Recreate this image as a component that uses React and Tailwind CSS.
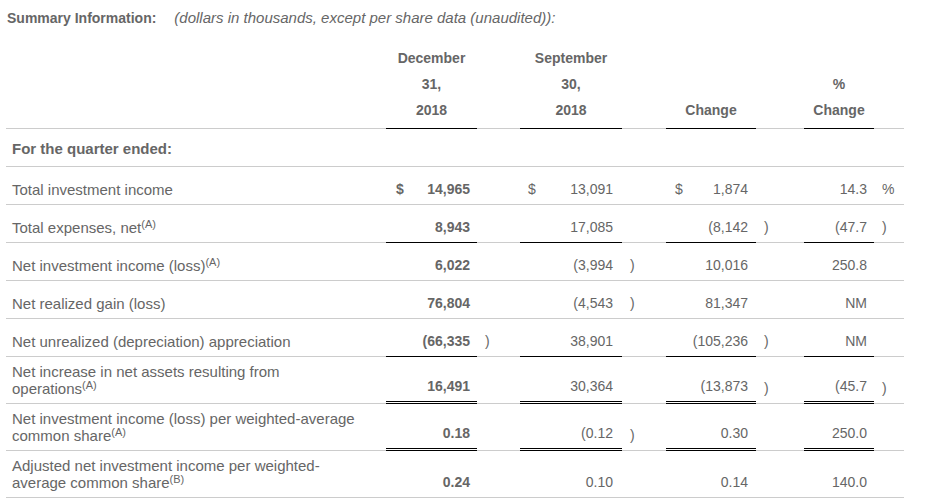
import React from "react";

const GRID =
  "grid grid-cols-[380px_91px_43px_102px_44px_90px_48px_70px_30px]";

const PAD = [
  "pl-[10px] pr-[7px]",
  "pl-[8px] pr-[9px]",
  "pl-[9px] pr-[8px]",
  "pl-[8px] pr-[7px]",
];

const LINE = {
  none: "",
  single: "border-b border-black -mb-px",
  double: "border-b-[3px] border-double border-black -mb-px",
};

const rows = [
  {
    label: "Total investment income",
    h: "h-[38px]",
    line: "none",
    cells: [
      ["$", "14,965", ""],
      ["$", "13,091", ""],
      ["$", "1,874", ""],
      ["", "14.3", "%"],
    ],
  },
  {
    label: "Total expenses, net",
    sup: "(A)",
    h: "h-[38px]",
    line: "single",
    cells: [
      ["", "8,943", ""],
      ["", "17,085", ""],
      ["", "(8,142", ")"],
      ["", "(47.7", ")"],
    ],
  },
  {
    label: "Net investment income (loss)",
    sup: "(A)",
    h: "h-[38px]",
    line: "none",
    cells: [
      ["", "6,022", ""],
      ["", "(3,994", ")"],
      ["", "10,016", ""],
      ["", "250.8", ""],
    ],
  },
  {
    label: "Net realized gain (loss)",
    h: "h-[38px]",
    line: "none",
    cells: [
      ["", "76,804", ""],
      ["", "(4,543", ")"],
      ["", "81,347", ""],
      ["", "NM", ""],
    ],
  },
  {
    label: "Net unrealized (depreciation) appreciation",
    h: "h-[38px]",
    line: "single",
    cells: [
      ["", "(66,335", ")"],
      ["", "38,901", ""],
      ["", "(105,236", ")"],
      ["", "NM", ""],
    ],
  },
  {
    label: "Net increase in net assets resulting from operations",
    sup: "(A)",
    h: "h-[47px]",
    line: "double",
    cells: [
      ["", "16,491", ""],
      ["", "30,364", ""],
      ["", "(13,873", ")"],
      ["", "(45.7", ")"],
    ],
  },
  {
    label: "Net investment income (loss) per weighted-average common share",
    sup: "(A)",
    h: "h-[47px]",
    line: "double",
    cells: [
      ["", "0.18", ""],
      ["", "(0.12", ")"],
      ["", "0.30", ""],
      ["", "250.0", ""],
    ],
  },
  {
    label: "Adjusted net investment income per weighted-average common share",
    sup: "(B)",
    h: "h-[47px]",
    line: "none",
    cells: [
      ["", "0.24", ""],
      ["", "0.10", ""],
      ["", "0.14", ""],
      ["", "140.0", ""],
    ],
  },
];

function Label({ text, sup }) {
  const words = text.split(" ");
  const last = words.pop();
  return (
    <div className="flex items-end pl-[6px] pb-[6px]">
      <div className="w-[350px] text-[15px] leading-[17px]">
        {words.join(" ")}{" "}
        <span className="whitespace-nowrap">
          {last}
          {sup && <sup className="text-[11px]">{sup}</sup>}
        </span>
      </div>
    </div>
  );
}

function ValueCell({ d, v, col, line }) {
  const bold = col === 0;
  return (
    <div
      className={`flex items-end ${d ? "justify-between" : "justify-end"} pb-[7px] leading-4 ${PAD[col]} ${LINE[line]} ${bold ? "font-bold" : ""}`}
    >
      {d && <span>{d}</span>}
      <span>{v}</span>
    </div>
  );
}

function ParenCell({ p }) {
  return <div className="flex items-end pl-[8px] pb-[7px] leading-4">{p}</div>;
}

function HeadCell({ lines }) {
  return (
    <div className="flex flex-col items-center justify-end pb-[5px] leading-[26px] font-bold border-b border-black -mb-px">
      {lines.map((l, i) => (
        <span key={i}>{l}</span>
      ))}
    </div>
  );
}

export default function App() {
  return (
    <div
      className="w-[925px] h-[500px] bg-white text-[14px] text-[#666666] overflow-hidden"
      style={{ fontFamily: '"Liberation Sans", Arial, sans-serif' }}
    >
      <div className="pt-[8px] pl-[7px] leading-5 h-[28px]">
        <span className="font-bold">Summary Information:</span>
        <span className="italic text-[15px] ml-[18px]">
          (dollars in thousands, except per share data (unaudited)):
        </span>
      </div>
      <div className="ml-[6px] w-[898px]">
        <div className={`${GRID} h-[101px] border-b border-[#cccccc]`}>
          <div />
          <HeadCell lines={["December", "31,", "2018"]} />
          <div />
          <HeadCell lines={["September", "30,", "2018"]} />
          <div />
          <HeadCell lines={["Change"]} />
          <div />
          <HeadCell lines={["%", "Change"]} />
          <div />
        </div>
        <div className="h-[38px] border-b border-[#cccccc] flex items-end pl-[6px] pb-[9px] text-[15px] leading-[17px] font-bold">
          For the quarter ended:
        </div>
        {rows.map((r, i) => (
          <div key={i} className={`${GRID} ${r.h} border-b border-[#cccccc]`}>
            <Label text={r.label} sup={r.sup} />
            {r.cells.map((c, j) => (
              <React.Fragment key={j}>
                <ValueCell d={c[0]} v={c[1]} col={j} line={r.line} />
                <ParenCell p={c[2]} />
              </React.Fragment>
            ))}
          </div>
        ))}
      </div>
    </div>
  );
}
